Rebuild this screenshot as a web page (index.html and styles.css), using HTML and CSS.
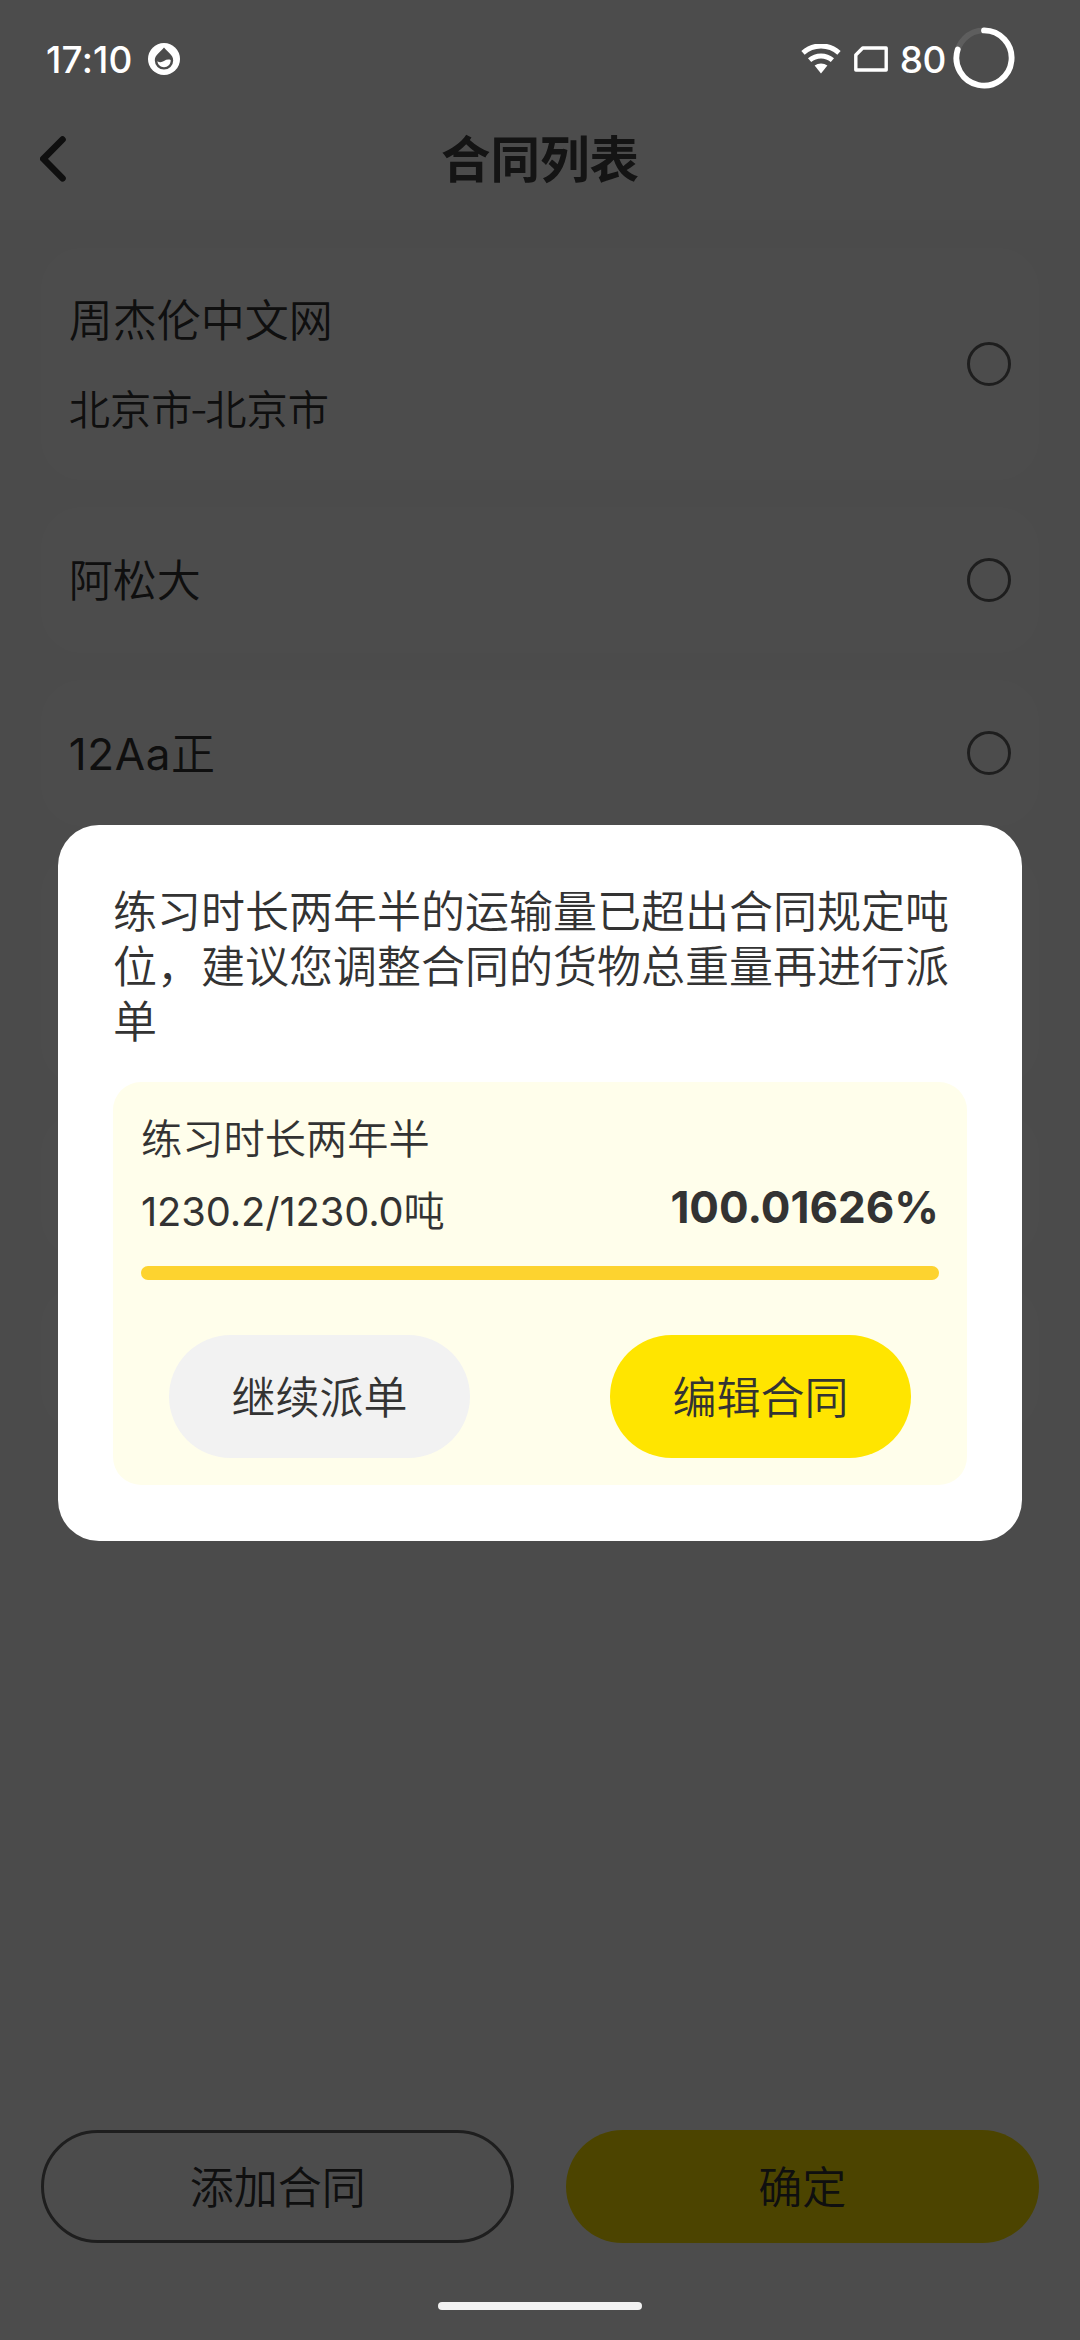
FILE: index.html
```html
<!DOCTYPE html>
<html lang="zh-CN">
<head>
<meta charset="utf-8">
<title>合同列表</title>
<link rel="stylesheet" href="styles.css">
</head>
<body>
<div class="screen">
  <header class="nav">
    <svg class="nav-back" viewBox="0 0 28 46" fill="none" stroke="#333" stroke-width="6.6" stroke-linecap="round" stroke-linejoin="round"><path d="M22.500 3.500 3.300 22.800 22.500 42.300"/></svg>
    <h1 class="nav-title">合同列表</h1>
  </header>
  <main class="list">
    <section class="card card-tall">
      <div class="card-text">
        <div class="card-name">周杰伦中文网</div>
        <div class="card-route">北京市<span class="dash">-</span>北京市</div>
      </div>
      <span class="radio"></span>
    </section>
    <section class="card">
      <div class="card-text"><div class="card-name">阿松大</div></div>
      <span class="radio"></span>
    </section>
    <section class="card">
      <div class="card-text"><div class="card-name"><span class="latin">12Aa</span>正</div></div>
      <span class="radio"></span>
    </section>
    <section class="card card-tall"></section>
    <section class="card"></section>
    <section class="card"></section>
  </main>
  <footer class="actions">
    <button class="action action-outline">添加合同</button>
    <button class="action action-fill">确定</button>
  </footer>
</div>

<div class="mask">
  <div class="dialog">
    <p class="dialog-text">练习时长两年半的运输量已超出合同规定吨位，建议您调整合同的货物总重量再进行派单</p>
    <div class="panel">
      <div class="panel-name">练习时长两年半</div>
      <div class="panel-row">
        <span class="amount"><span class="figures">1230.2/1230.0</span>吨</span>
        <span class="percent">100.01626%</span>
      </div>
      <div class="bar"></div>
      <div class="panel-buttons">
        <button class="pill pill-grey">继续派单</button>
        <button class="pill pill-yellow">编辑合同</button>
      </div>
    </div>
  </div>
</div>

<div class="status">
  <span class="status-time">17:10</span>
  <svg class="icon-drop" viewBox="0 0 32 32">
    <circle cx="16" cy="16" r="16" fill="#fff"/>
    <path d="M16 4.600C19.200 8.600 25.200 12 25.200 17.400A9.200 9.200 0 0 1 6.800 17.400C6.800 12 12.800 8.600 16 4.600Z" fill="#4c4c4c"/>
    <path d="M9.400 18.300C11.600 19.600 13.800 19.400 16 18C18.200 16.500 20.600 16.300 22.700 17C22.800 21.500 19.800 24.200 16 24.200C12.600 24.200 9.800 22 9.400 18.300Z" fill="#fff"/>
  </svg>
  <span class="status-space"></span>
  <svg class="icon-wifi" viewBox="0 0 40 30" fill="none" stroke="#fff">
    <path d="M2 8.800A27 27 0 0 1 38 8.800" stroke-width="5"/>
    <path d="M8.600 16.200A17.500 17.500 0 0 1 31.400 16.200" stroke-width="5"/>
    <path d="M13.600 21.600A10.500 10.500 0 0 1 26.400 21.600L20 29.400Z" fill="#fff" stroke="none"/>
  </svg>
  <svg class="icon-sim" viewBox="0 0 34 26" fill="none" stroke="#fff" stroke-width="3.400" stroke-linejoin="round"><path d="M8.700 2H32.200V24H1.800V9Z"/></svg>
  <span class="status-level">80</span>
  <svg class="icon-ring" viewBox="0 0 62 62" fill="none" stroke-width="5.800" stroke-linecap="round">
    <circle cx="31" cy="31" r="27.600" stroke="#5e5e5e"/>
    <path d="M31 3.400A27.600 27.600 0 1 1 4.750 22.470" stroke="#fff"/>
  </svg>
</div>
<div class="home-bar"></div>
</body>
</html>
```
FILE: styles.css
```css
* {
  box-sizing: border-box;
}

body {
  margin: 0;
  width: 1080px;
  height: 2340px;
  position: relative;
  overflow: hidden;
  font-family: Inter, "Noto Sans CJK SC", sans-serif;
  font-size: 44px;
  font-weight: 350;
  color: #333;
}

button {
  font: inherit;
  color: inherit;
  border: 0;
  padding: 0;
}

.screen {
  height: 2340px;
  display: flex;
  flex-direction: column;
  background: #fafafa;
}

/* Header */
.nav {
  height: 220px;
  padding: 98px 40px 0;
  display: grid;
  grid-template-columns: 28px 1fr 28px;
  align-items: center;
  background: #fff;
}

.nav-back {
  width: 28px;
  height: 46px;
}

.nav-title {
  margin: 0;
  padding-top: 2px;
  text-align: center;
  font-size: 49.5px;
  line-height: 60px;
  font-weight: 700;
  color: #444;
}

/* Contract list */
.list {
  flex: 1;
  padding: 27.5px 41.25px;
  display: flex;
  flex-direction: column;
  gap: 27px;
}

.card {
  height: 146px;
  flex: none;
  padding: 0 27.5px;
  display: flex;
  align-items: center;
  justify-content: space-between;
  border-radius: 41px;
  background: #fff;
}

.card-tall {
  height: 232px;
}

.card-text {
  padding-top: 3px;
  display: flex;
  flex-direction: column;
  gap: 33px;
}

.card-name {
  line-height: 56px;
}

.latin {
  font-weight: 400;
  letter-spacing: 0.6px;
}

.card-route {
  font-size: 41.25px;
  line-height: 56px;
}

.dash {
  margin: 0 -3px;
}

.radio {
  width: 44px;
  height: 44px;
  border: 3px solid #666;
  border-radius: 50%;
}

/* Bottom buttons */
.actions {
  height: 240px;
  padding: 30px 41.25px 0;
  display: flex;
  justify-content: space-between;
  align-items: flex-start;
  background: #fff;
}

.action {
  width: 473px;
  height: 113px;
  padding-bottom: 4px;
  border-radius: 57px;
}

.action-outline {
  background: #fff;
  border: 3px solid #666;
}

.action-fill {
  background: #ffe500;
}

/* Dialog */
.mask {
  position: absolute;
  inset: 0;
  padding: 825px 58px 0;
  background: rgba(0, 0, 0, 0.7);
}

.dialog {
  height: 716px;
  padding: 60px 55px 0;
  border-radius: 41px;
  background: #fff;
}

.dialog-text {
  margin: 0;
  line-height: 55px;
}

.panel {
  height: 403px;
  margin-top: 32px;
  padding: 29px 28px 0;
  border-radius: 28px;
  background: #fffeeb;
}

.panel-name {
  font-size: 41.25px;
  line-height: 56px;
}

.panel-row {
  height: 56px;
  margin-top: 14px;
  display: flex;
  justify-content: space-between;
  line-height: 56px;
}

.amount {
  padding-top: 2px;
  font-size: 41.25px;
}

.figures {
  font-size: 39.8px;
  font-weight: 400;
  letter-spacing: -0.1px;
}

.percent {
  font-weight: 700;
  line-height: 52px;
}

.bar {
  height: 14px;
  margin-top: 29px;
  border-radius: 7px;
  background: #fdd32f;
}

.panel-buttons {
  margin-top: 55px;
  padding: 0 28px;
  display: flex;
  justify-content: space-between;
}

.pill {
  width: 301px;
  height: 123px;
  padding-bottom: 4px;
  border-radius: 62px;
}

.pill-grey {
  background: #f2f2f2;
}

.pill-yellow {
  background: #ffe500;
}

/* System bars drawn over the app */
.status {
  position: absolute;
  top: 0;
  left: 0;
  width: 1080px;
  height: 118px;
  padding: 0 65px 0 46px;
  display: flex;
  align-items: center;
  color: #fff;
  font-size: 37px;
  font-weight: 500;
}

.status-time {
  letter-spacing: 0.2px;
}

.icon-drop {
  width: 32px;
  height: 32px;
  margin-left: 15px;
}

.status-space {
  flex: 1;
}

.icon-wifi {
  width: 40px;
  height: 30px;
}

.icon-sim {
  width: 34px;
  height: 26px;
  margin: 0 12px 0 13px;
}

.status-level {
  letter-spacing: -0.4px;
}

.icon-ring {
  width: 62px;
  height: 62px;
  margin: 0 0 3px 7px;
}

.home-bar {
  position: absolute;
  left: 438px;
  top: 2302px;
  width: 204px;
  height: 8px;
  border-radius: 4px;
  background: #f2f2f2;
}
```
